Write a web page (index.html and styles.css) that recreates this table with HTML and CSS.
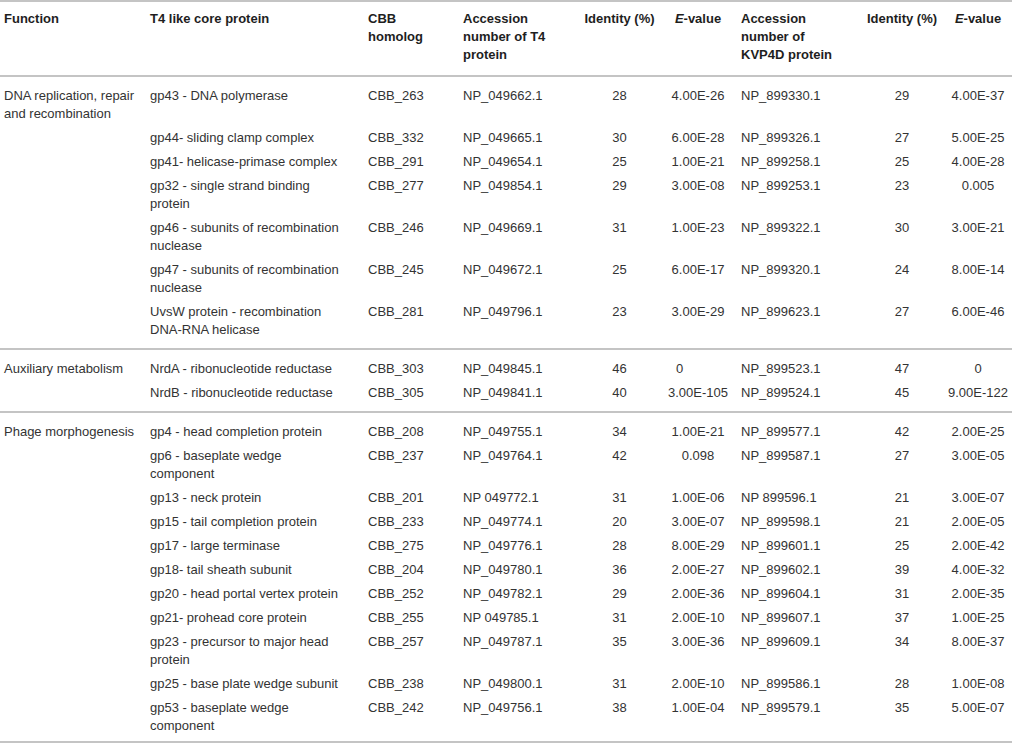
FILE: index.html
```html
<!DOCTYPE html>
<html lang="en">
<head>
    <meta charset="UTF-8">
    <title>T4 like core proteins</title>
    <link rel="stylesheet" href="styles.css">
</head>
<body>
    <table class="data">
        <colgroup>
            <col class="c-func">
            <col class="c-prot">
            <col class="c-cbb">
            <col class="c-acc">
            <col class="c-id">
            <col class="c-ev">
            <col class="c-acc2">
            <col class="c-id2">
            <col class="c-ev2">
        </colgroup>
        <thead>
            <tr>
                <th>Function</th>
                <th>T4 like core protein</th>
                <th>CBB<br>homolog</th>
                <th>Accession<br>number of T4<br>protein</th>
                <th class="num">Identity (%)</th>
                <th class="num"><i>E</i>-value</th>
                <th>Accession<br>number of<br>KVP4D protein</th>
                <th class="num">Identity (%)</th>
                <th class="num"><i>E</i>-value</th>
            </tr>
        </thead>
        <tbody>
            <tr>
                <td>DNA replication, repair and recombination</td>
                <td class="prot">gp43 - DNA polymerase</td>
                <td>CBB_263</td>
                <td>NP_049662.1</td>
                <td class="num">28</td>
                <td class="num">4.00E-26</td>
                <td>NP_899330.1</td>
                <td class="num">29</td>
                <td class="num">4.00E-37</td>
            </tr>
            <tr>
                <td></td>
                <td class="prot">gp44- sliding clamp complex</td>
                <td>CBB_332</td>
                <td>NP_049665.1</td>
                <td class="num">30</td>
                <td class="num">6.00E-28</td>
                <td>NP_899326.1</td>
                <td class="num">27</td>
                <td class="num">5.00E-25</td>
            </tr>
            <tr>
                <td></td>
                <td class="prot">gp41- helicase-primase complex</td>
                <td>CBB_291</td>
                <td>NP_049654.1</td>
                <td class="num">25</td>
                <td class="num">1.00E-21</td>
                <td>NP_899258.1</td>
                <td class="num">25</td>
                <td class="num">4.00E-28</td>
            </tr>
            <tr>
                <td></td>
                <td class="prot">gp32 - single strand binding protein</td>
                <td>CBB_277</td>
                <td>NP_049854.1</td>
                <td class="num">29</td>
                <td class="num">3.00E-08</td>
                <td>NP_899253.1</td>
                <td class="num">23</td>
                <td class="num">0.005</td>
            </tr>
            <tr>
                <td></td>
                <td class="prot">gp46 - subunits of recombination nuclease</td>
                <td>CBB_246</td>
                <td>NP_049669.1</td>
                <td class="num">31</td>
                <td class="num">1.00E-23</td>
                <td>NP_899322.1</td>
                <td class="num">30</td>
                <td class="num">3.00E-21</td>
            </tr>
            <tr>
                <td></td>
                <td class="prot">gp47 - subunits of recombination nuclease</td>
                <td>CBB_245</td>
                <td>NP_049672.1</td>
                <td class="num">25</td>
                <td class="num">6.00E-17</td>
                <td>NP_899320.1</td>
                <td class="num">24</td>
                <td class="num">8.00E-14</td>
            </tr>
            <tr>
                <td></td>
                <td class="prot">UvsW protein - recombination DNA-RNA helicase</td>
                <td>CBB_281</td>
                <td>NP_049796.1</td>
                <td class="num">23</td>
                <td class="num">3.00E-29</td>
                <td>NP_899623.1</td>
                <td class="num">27</td>
                <td class="num">6.00E-46</td>
            </tr>
        </tbody>
        <tbody>
            <tr>
                <td>Auxiliary metabolism</td>
                <td class="prot">NrdA - ribonucleotide reductase</td>
                <td>CBB_303</td>
                <td>NP_049845.1</td>
                <td class="num">46</td>
                <td class="zero">0</td>
                <td>NP_899523.1</td>
                <td class="num">47</td>
                <td class="num">0</td>
            </tr>
            <tr>
                <td></td>
                <td class="prot">NrdB - ribonucleotide reductase</td>
                <td>CBB_305</td>
                <td>NP_049841.1</td>
                <td class="num">40</td>
                <td class="num">3.00E-105</td>
                <td>NP_899524.1</td>
                <td class="num">45</td>
                <td class="num">9.00E-122</td>
            </tr>
        </tbody>
        <tbody class="morph">
            <tr>
                <td>Phage morphogenesis</td>
                <td class="prot">gp4 - head completion protein</td>
                <td>CBB_208</td>
                <td>NP_049755.1</td>
                <td class="num">34</td>
                <td class="num">1.00E-21</td>
                <td>NP_899577.1</td>
                <td class="num">42</td>
                <td class="num">2.00E-25</td>
            </tr>
            <tr>
                <td></td>
                <td class="prot">gp6 - baseplate wedge component</td>
                <td>CBB_237</td>
                <td>NP_049764.1</td>
                <td class="num">42</td>
                <td class="num">0.098</td>
                <td>NP_899587.1</td>
                <td class="num">27</td>
                <td class="num">3.00E-05</td>
            </tr>
            <tr>
                <td></td>
                <td class="prot">gp13 - neck protein</td>
                <td>CBB_201</td>
                <td>NP 049772.1</td>
                <td class="num">31</td>
                <td class="num">1.00E-06</td>
                <td>NP 899596.1</td>
                <td class="num">21</td>
                <td class="num">3.00E-07</td>
            </tr>
            <tr>
                <td></td>
                <td class="prot">gp15 - tail completion protein</td>
                <td>CBB_233</td>
                <td>NP_049774.1</td>
                <td class="num">20</td>
                <td class="num">3.00E-07</td>
                <td>NP_899598.1</td>
                <td class="num">21</td>
                <td class="num">2.00E-05</td>
            </tr>
            <tr>
                <td></td>
                <td class="prot">gp17 - large terminase</td>
                <td>CBB_275</td>
                <td>NP_049776.1</td>
                <td class="num">28</td>
                <td class="num">8.00E-29</td>
                <td>NP_899601.1</td>
                <td class="num">25</td>
                <td class="num">2.00E-42</td>
            </tr>
            <tr>
                <td></td>
                <td class="prot">gp18- tail sheath subunit</td>
                <td>CBB_204</td>
                <td>NP_049780.1</td>
                <td class="num">36</td>
                <td class="num">2.00E-27</td>
                <td>NP_899602.1</td>
                <td class="num">39</td>
                <td class="num">4.00E-32</td>
            </tr>
            <tr>
                <td></td>
                <td class="prot">gp20 - head portal vertex protein</td>
                <td>CBB_252</td>
                <td>NP_049782.1</td>
                <td class="num">29</td>
                <td class="num">2.00E-36</td>
                <td>NP_899604.1</td>
                <td class="num">31</td>
                <td class="num">2.00E-35</td>
            </tr>
            <tr>
                <td></td>
                <td class="prot">gp21- prohead core protein</td>
                <td>CBB_255</td>
                <td>NP 049785.1</td>
                <td class="num">31</td>
                <td class="num">2.00E-10</td>
                <td>NP_899607.1</td>
                <td class="num">37</td>
                <td class="num">1.00E-25</td>
            </tr>
            <tr>
                <td></td>
                <td class="prot">gp23 - precursor to major head protein</td>
                <td>CBB_257</td>
                <td>NP_049787.1</td>
                <td class="num">35</td>
                <td class="num">3.00E-36</td>
                <td>NP_899609.1</td>
                <td class="num">34</td>
                <td class="num">8.00E-37</td>
            </tr>
            <tr>
                <td></td>
                <td class="prot">gp25 - base plate wedge subunit</td>
                <td>CBB_238</td>
                <td>NP_049800.1</td>
                <td class="num">31</td>
                <td class="num">2.00E-10</td>
                <td>NP_899586.1</td>
                <td class="num">28</td>
                <td class="num">1.00E-08</td>
            </tr>
            <tr>
                <td></td>
                <td class="prot">gp53 - baseplate wedge component</td>
                <td>CBB_242</td>
                <td>NP_049756.1</td>
                <td class="num">38</td>
                <td class="num">1.00E-04</td>
                <td>NP_899579.1</td>
                <td class="num">35</td>
                <td class="num">5.00E-07</td>
            </tr>
        </tbody>
    </table>
</body>
</html>
```

FILE: styles.css
```css
body {
    margin: 0;
    background-color: #fff;
    font-family: "Liberation Sans", Arial, sans-serif;
    font-size: 13px;
    color: #333;
}
.data {
    width: 1012px;
    table-layout: fixed;
    border-collapse: collapse;
    border-top: 2px solid #c4c4c4;
    border-bottom: 2px solid #c4c4c4;
}
.c-func { width: 146px; }
.c-prot { width: 218px; }
.c-cbb { width: 95px; }
.c-acc { width: 121px; }
.c-id { width: 79px; }
.c-ev { width: 78px; }
.c-acc2 { width: 123px; }
.c-id2 { width: 84px; }
.c-ev2 { width: 68px; }
th, td {
    padding: 3px 4px;
    line-height: 18px;
    text-align: left;
    vertical-align: top;
}
th {
    padding-top: 8px;
    padding-bottom: 11px;
    font-weight: bold;
    color: #1e1e1e;
    border-bottom: 2px solid #c4c4c4;
}
tbody + tbody {
    border-top: 2px solid #c4c4c4;
}
tbody tr:first-child td {
    padding-top: 10px;
}
tbody tr:last-child td {
    padding-bottom: 9px;
}
.morph tr:last-child td {
    padding-bottom: 6px;
}
.prot {
    padding-right: 22px;
}
.num {
    text-align: center;
}
.zero {
    padding-left: 17px;
}
```
